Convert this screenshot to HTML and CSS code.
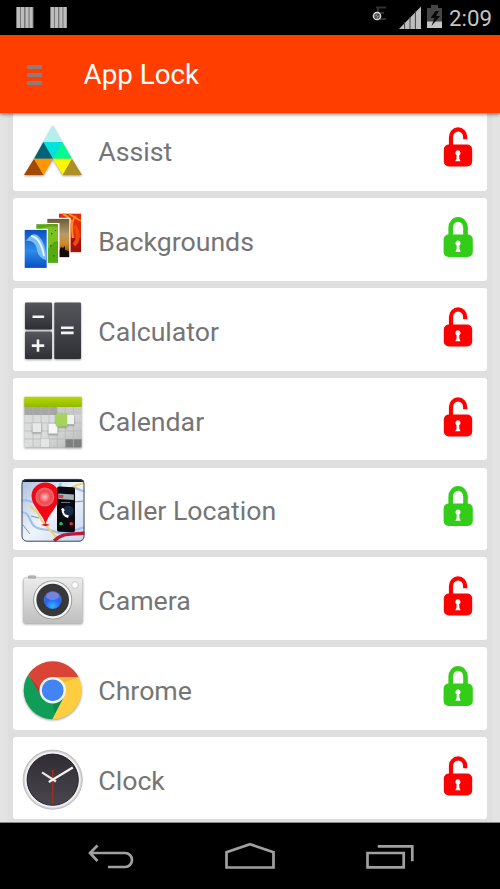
FILE: index.html
```html
<!DOCTYPE html>
<html lang="en">
<head>
    <meta charset="UTF-8">
    <meta name="viewport" content="width=device-width, initial-scale=1.0">
    <title>App Lock</title>
    <link rel="stylesheet" href="styles.css">
</head>
<body>

    <!-- Shared lock icons and gradients -->
    <svg class="defs" width="0" height="0">
        <defs>
            <symbol id="unlocked" viewBox="0 0 30 40">
                <path d="M8 20V10a7 7.500 0 0 1 14.200 0v2.300" fill="none" stroke="#fe0000" stroke-width="4.2"/>
                <rect x=".8" y="17.500" width="28.400" height="22" rx="5" fill="#fe0000"/>
                <path d="M14.900 23.200a2.700 2.700 0 0 1 1.300 5l.2 3.500 1.200 2.600h-5.400l1.300-2.600.1-3.500a2.700 2.700 0 0 1 1.300-5z" fill="#fff"/>
            </symbol>
            <symbol id="locked" viewBox="0 0 30 40">
                <path d="M7.700 20V10.600a7.400 8.200 0 0 1 14.800 0V20" fill="none" stroke="#33cc19" stroke-width="4.600"/>
                <rect x=".6" y="17.500" width="29.200" height="22.500" rx="5" fill="#33cc19"/>
                <path d="M15 23.500a2.700 2.700 0 0 1 1.300 5l.2 3.500 1.200 2.800h-5.400l1.300-2.800.1-3.500a2.700 2.700 0 0 1 1.300-5z" fill="#fff"/>
            </symbol>
            <linearGradient id="key" x1="0" y1="0" x2="0" y2="1">
                <stop offset="0" stop-color="#55555c"/><stop offset="1" stop-color="#2f2f36"/>
            </linearGradient>
            <linearGradient id="metal" x1="0" y1="0" x2="0" y2="1">
                <stop offset="0" stop-color="#ececec"/><stop offset="1" stop-color="#bfbfbf"/>
            </linearGradient>
            <linearGradient id="lime" x1="0" y1="0" x2="0" y2="1">
                <stop offset="0" stop-color="#b7da00"/><stop offset="1" stop-color="#91b800"/>
            </linearGradient>
            <linearGradient id="days" x1="0" y1="0" x2="1" y2="1">
                <stop offset="0" stop-color="#d8dada"/><stop offset=".5" stop-color="#dcdede"/><stop offset="1" stop-color="#b5b7b7"/>
            </linearGradient>
            <linearGradient id="sea" x1="0" y1="0" x2="0" y2="1">
                <stop offset="0" stop-color="#0c4fc0"/><stop offset=".55" stop-color="#2c8cea"/><stop offset="1" stop-color="#0a4fc4"/>
            </linearGradient>
            <linearGradient id="dusk" x1="0" y1="0" x2="0" y2="1">
                <stop offset="0" stop-color="#6d5a3c"/><stop offset=".4" stop-color="#b79a66"/><stop offset=".65" stop-color="#d18a25"/><stop offset="1" stop-color="#5c3205"/>
            </linearGradient>
            <linearGradient id="map" x1="0" y1="0" x2="1" y2="1">
                <stop offset="0" stop-color="#a9bedb"/><stop offset=".5" stop-color="#eff4fb"/><stop offset="1" stop-color="#c6d7f0"/>
            </linearGradient>
            <radialGradient id="lens" cx=".5" cy=".85" r=".8">
                <stop offset="0" stop-color="#35b4ff"/><stop offset=".5" stop-color="#2766f2"/><stop offset="1" stop-color="#5a62c0"/>
            </radialGradient>
            <radialGradient id="pin" cx=".5" cy=".5" r=".5">
                <stop offset="0" stop-color="#ffc4c4"/><stop offset=".6" stop-color="#f04a4e"/><stop offset="1" stop-color="#e56a6e"/>
            </radialGradient>
            <linearGradient id="face" x1="0" y1="0" x2="0" y2="1">
                <stop offset="0" stop-color="#2f2c33"/><stop offset="1" stop-color="#4a464e"/>
            </linearGradient>
            <clipPath id="disc"><circle cx="31.7" cy="32.2" r="29"/></clipPath>
            <clipPath id="tile"><rect x=".5" y=".9" width="63" height="62.8" rx="5"/></clipPath>
        </defs>
    </svg>

    <div class="status-bar">
        <svg class="notifications" width="52" height="22" viewBox="0 0 52 22">
            <path d="M0 0h17.5v21H0zM34 0h17v21H34z" fill="#777"/>
            <path d="M1 0h3v21H1zM5 0h3v21H5zM9.5 0h3v21h-3zM13.6 0h3v21h-3zM35 0h3v21h-3zM39 0h3v21h-3zM43.4 0h3v21h-3zM47.5 0h3v21h-3z" fill="#bdbdbd"/>
        </svg>
        <svg class="system" width="72" height="25" viewBox="0 0 72 25">
            <path d="M4 2.500h10M4 8h8M6 14h8M6 2v12" fill="none" stroke="#303030" stroke-width="2"/>
            <circle cx="5" cy="11" r="4.300" fill="#ddd"/>
            <circle cx="5" cy="11" r="2.200" fill="none" stroke="#444" stroke-width="1.300"/>
            <path d="M3 13l4-4" stroke="#444" stroke-width="1.300"/>
            <path d="M27 24L49 1.500V24z" fill="#bebebe"/>
            <path d="M32.600 17v7M38 12v12M43.400 6v18" stroke="#444" stroke-width="1"/>
            <path d="M55 3h4V0h7v3h4v20H55z" fill="#464646"/>
            <path d="M55 16.500h15V23H55z" fill="#c5c5c5"/>
            <path d="M63.500 6l-5 7h4l-3 8 8.500-10h-4l3-5z" fill="#080808"/>
        </svg>
        <span class="time">2:09</span>
    </div>

    <header class="toolbar">
        <div class="menu"><i></i><i></i><i></i></div>
        <h1>App Lock</h1>
    </header>

    <main class="app-list">
        <div class="app">
            <svg class="icon shadow" viewBox="0 0 64 64">
                <path d="M31.800 6.300L22.300 23h19z" fill="#b5efec"/>
                <path d="M22.300 23h19L32 39.700z" fill="#00e2df"/>
                <path d="M22.300 23L13 39.700h19z" fill="#006377"/>
                <path d="M41.300 23L32 39.700h19z" fill="#00fb92"/>
                <path d="M13 39.700L3 56h19.500z" fill="#a34a00"/>
                <path d="M13 39.700h19L22.500 56z" fill="#ff9500"/>
                <path d="M32 39.700h19L41.700 56z" fill="#fff500"/>
                <path d="M51 39.700L41.700 56H61z" fill="#ac8f25"/>
            </svg>
            <span class="name">Assist</span>
            <svg class="lock"><use href="#unlocked"/></svg>
        </div>
        <div class="app">
            <svg class="icon" viewBox="0 0 64 64">
                <path d="M38 4.700h22v38.500H38z" fill="#e52a05"/>
                <path d="M42 5c7 3 10 8 9 15M55 7c-6 4-5 25 2 32M48 5l12 7" stroke="#ff8c17" stroke-width="2" fill="none"/>
                <path d="M49.500 29h10.500v14H49.500z" fill="#a51208"/>
                <path d="M53 17c5 5 5 14 0 19" stroke="#f0490e" stroke-width="4" fill="none"/>
                <path d="M26.300 8.800h23.200v40.400h-2V10H26.300z" fill="#fff"/>
                <path d="M26.300 9.900h22v38.300h-22z" fill="url(#dusk)"/>
                <path d="M38 42l2-4 2 1 2-2v4l4 1v6H38z" fill="#140a03"/>
                <path d="M15.300 14h23.200v41h-2V15H15.300z" fill="#fff"/>
                <path d="M15.300 15.200H37v38.700H15.300z" fill="#57a912"/>
                <path d="M16 22c8-5 14-5 21-4v15c-5-2-7 4-11 8z" fill="#7cc022"/>
                <path d="M30 24h1.500v1.500H30zM29 36h1.500v1.500H29zM32 46h1.500v1.500H32zM34 21h1v1h-1z" fill="#28720a"/>
                <path d="M2.800 19.800h24V60h-24z" fill="#fff"/>
                <path d="M3.700 20.900h22v38h-22z" fill="url(#sea)"/>
                <path d="M5 32c4-6 7-8 11-6 6 4 8 12 9 18v7c-4-1-8-4-9-10-1-7-6-10-11-9z" fill="#8bcaf8" opacity=".85"/>
                <path d="M10 27c7 1 11 9 13 20" stroke="#e9f7ff" stroke-width="1.800" fill="none"/>
            </svg>
            <span class="name">Backgrounds</span>
            <svg class="lock"><use href="#locked"/></svg>
        </div>
        <div class="app">
            <svg class="icon shadow" viewBox="0 0 64 64">
                <rect x="4" y="3.400" width="27" height="27" rx="1" fill="url(#key)"/>
                <rect x="4" y="32.400" width="27" height="27.600" rx="1" fill="url(#key)"/>
                <rect x="33.300" y="3.400" width="26.700" height="56.600" rx="1" fill="url(#key)"/>
                <path d="M11.500 17.700h11.600M10.800 46.600h12.400M17 40.400v12.400M40 28.700h12.600M40 33.900h12.600" stroke="#f4f4f4" stroke-width="2.600"/>
            </svg>
            <span class="name">Calculator</span>
            <svg class="lock"><use href="#unlocked"/></svg>
        </div>
        <div class="app">
            <svg class="icon shadow" viewBox="0 0 64 64">
                <path d="M3.500 17h57v41.300h-57z" fill="url(#days)"/>
                <path d="M3.500 17.700h32.800v8.300H3.500z" fill="#a5a7a7"/>
                <path d="M36.300 17.700h24V26h-24z" fill="#c8caca"/>
                <path d="M44 50h16.500v8.300H44z" fill="#7d7f7f"/>
                <path d="M3.500 34h57M3.500 42h57M3.500 50h57M12 18v40M20 18v40M28 18v40M36.300 18v40M44.300 18v40M52.400 18v40" stroke="#b6b8b8" stroke-width=".7"/>
                <path d="M3.300 7.800h57.400V18H3.300z" fill="url(#lime)"/>
                <path d="M20 50h8v8h-8z" fill="#e4e4e4"/>
                <g class="shadow">
                    <path d="M11.500 34.200h8.600v9h-8.600z" fill="#e9e9e9"/>
                    <path d="M27.500 34.800h9v9.800h-9z" fill="#f6f6f6"/>
                    <path d="M45 25.800h8v9.500h-8z" fill="#f2f2f2"/>
                    <path d="M34.700 24.500h11.500v13H34.700z" fill="#a5d35c"/>
                </g>
            </svg>
            <span class="name">Calendar</span>
            <svg class="lock"><use href="#unlocked"/></svg>
        </div>
        <div class="app">
            <svg class="icon" viewBox="0 0 64 64">
                <g clip-path="url(#tile)">
                    <path d="M0 0h64v64H0z" fill="url(#map)"/>
                    <path d="M0 34c9 0 8 9 13 14s13 2 22 6 17-2 29-5M0 23c8-3 11 4 18 0M40 5c-4 4 4 7 10 5s9 4 14 3" stroke="#a3bfe6" stroke-width="2.200" fill="none"/>
                    <path d="M9 28l8 7 4 8 15 17M50 10l6-3 8-2" stroke="#f3d06d" stroke-width="2" fill="none"/>
                    <path d="M10 38l8 2M54 24l8-1M2 47l7 9" stroke="#8091b0" stroke-width="1" fill="none"/>
                    <path d="M33 63c9-9 17-6 31-8" stroke="#c41637" stroke-width="3.400" fill="none"/>
                    <path d="M0 0h64v4H0z" fill="#111722"/>
                </g>
                <path d="M24.500 46.500C22 36 10.500 28 10.500 18a14 13.500 0 0 1 28 0c0 10-11.500 18-14 28.500z" fill="#f10817"/>
                <path d="M20 47l4.500-1.500L29 47l-4.500 1z" fill="#e30b14"/>
                <circle cx="23.800" cy="19" r="9.500" fill="url(#pin)"/>
                <path d="M36 10.500q0-2 2-2l14 .8q2 0 2 2v41q0 2-2 2l-14-.5q-2 0-2-2z" fill="#080a0f"/>
                <path d="M37.300 15.500l15.600 1V22l-15.600-1z" fill="#a8aeb6"/>
                <path d="M37.300 17h5v3h-5z" fill="#d63d48"/>
                <path d="M40 24.500h9" stroke="#70757f" stroke-width="1"/>
                <circle cx="47" cy="33" r="5.500" fill="#172b48"/>
                <path d="M41.500 31c0 4 2 7 5.500 8" stroke="#f5f5f5" stroke-width="2" fill="none"/>
                <path d="M41 30.500l2 2.500M44.500 37.500l3 1" stroke="#fff" stroke-width="2.200"/>
                <circle cx="40" cy="45.800" r="1.800" fill="#20c463"/>
                <circle cx="50.300" cy="45.800" r="1.800" fill="#e22b35"/>
                <rect x="1" y="1.400" width="62" height="61.800" rx="5" fill="none" stroke="#3a475f" stroke-width="1"/>
            </svg>
            <span class="name">Caller Location</span>
            <svg class="lock"><use href="#locked"/></svg>
        </div>
        <div class="app">
            <svg class="icon shadow" viewBox="0 0 64 64">
                <rect x="7" y="7.800" width="8" height="3.500" rx="1.200" fill="#aaa"/>
                <rect x="2.500" y="9.800" width="59" height="45.200" rx="2" fill="url(#metal)" stroke="#c4c4c4" stroke-width=".6"/>
                <rect x="7" y="7.800" width="8" height="3" rx="1.200" fill="#b0b0b0"/>
                <circle cx="31.700" cy="32" r="19.500" fill="#8e8e8e"/>
                <circle cx="31.700" cy="32" r="18.700" fill="#f3f3f3"/>
                <circle cx="31.700" cy="32" r="16.300" fill="#373839"/>
                <circle cx="31.700" cy="32" r="9" fill="url(#lens)"/>
                <ellipse cx="31.700" cy="28" rx="6.500" ry="4" fill="#9aa0e4" opacity=".55"/>
                <circle cx="54" cy="17" r="3.300" fill="#fff" stroke="#bbb" stroke-width=".7"/>
            </svg>
            <span class="name">Camera</span>
            <svg class="lock"><use href="#unlocked"/></svg>
        </div>
        <div class="app">
            <svg class="icon shadow" viewBox="0 0 64 64">
                <g clip-path="url(#disc)">
                    <path d="M0 0h64v19.200H31.700L20.400 38.700 7.500 17z" fill="#da4437"/>
                    <path d="M7.500 17L20.400 38.700 31.700 45.200 43 38.700 31 62H0V17z" fill="#0f9d58"/>
                    <path d="M31.700 19.200H64V64H30l13-25.300z" fill="#ffcd40"/>
                    <path d="M31.700 19.200h25.500L44.500 24z" fill="#e5aa2e" opacity=".6"/>
                    <path d="M8.500 18.500L20.400 38.700 18.700 31z" fill="#a32d23" opacity=".6"/>
                    <path d="M43 38.700L34 55l-2.300-9.800z" fill="#0a7c43" opacity=".6"/>
                </g>
                <circle cx="31.700" cy="32.200" r="13.200" fill="#f5f7f5"/>
                <circle cx="31.700" cy="32.200" r="10.800" fill="#4284f3"/>
            </svg>
            <span class="name">Chrome</span>
            <svg class="lock"><use href="#locked"/></svg>
        </div>
        <div class="app">
            <svg class="icon" viewBox="0 0 64 64">
                <circle cx="31.700" cy="31.700" r="29.600" fill="#d3d3d6" stroke="#b5b5b5" stroke-width=".8"/>
                <circle cx="31.700" cy="31.700" r="28" fill="#f0f0f4"/>
                <circle cx="31.700" cy="31.700" r="25.600" fill="url(#face)" stroke="#252329"/>
                <path d="M31.700 22v33.500" stroke="#a52b1f" stroke-width="1.700"/>
                <path d="M21 24.300l14 9.200" stroke="#e8e8e8" stroke-width="2.200"/>
                <path d="M27.800 34l24-14.500" stroke="#f4f4f4" stroke-width="2.200"/>
            </svg>
            <span class="name">Clock</span>
            <svg class="lock"><use href="#unlocked"/></svg>
        </div>
    </main>

    <nav class="nav-bar">
        <svg viewBox="0 0 48 28"><path d="M2 10h36a7 7 0 0 1 0 14H21M10.500 2.500L3 10l7.500 8"/></svg>
        <svg viewBox="0 0 52 28"><path d="M1.500 24.500V9.300L25 1.200l23.500 8.100v15.200z"/></svg>
        <svg viewBox="0 0 48 28"><path d="M1.500 10h36.200v14.400H1.500zM11.800 3.300h34.500v14.900"/></svg>
    </nav>

</body>
</html>
```

FILE: styles.css
```css
* {
    box-sizing: border-box;
}

body {
    display: flex;
    flex-direction: column;
    height: 889px;
    margin: 0;
    overflow: hidden;
    background: #000;
    font-family: Roboto, "Noto Sans", sans-serif;
}

svg {
    display: block;
    flex: none;
}

.defs {
    position: absolute;
}

/* Status bar */
.status-bar {
    display: flex;
    align-items: center;
    flex: none;
    height: 35px;
    padding: 0 8px 0 16px;
    background: #000;
}

.system {
    margin: 0 5px 0 auto;
}

.time {
    color: #c4c4c4;
    font-size: 22.3px;
    line-height: 35px;
    padding-top: 2px;
}

/* Toolbar */
.toolbar {
    display: flex;
    align-items: center;
    flex: none;
    height: 78px;
    padding-left: 27px;
    background: #ff3e00;
    box-shadow: 0 1px 4px rgba(0, 0, 0, 0.6);
    z-index: 1;
}

.menu {
    display: flex;
    flex-direction: column;
    gap: 4.3px;
    width: 15px;
    margin-top: 2px;
}

.menu i {
    height: 4px;
    background: #8b7d7b;
}

h1 {
    margin: 0 0 0 41.5px;
    color: #fff;
    font-size: 27.8px;
    font-weight: 400;
}

/* App list, scrolled slightly under the toolbar */
.app-list {
    flex: none;
    height: 709.5px;
    padding: 0 13px;
    overflow: hidden;
    background: linear-gradient(90deg, #e3e3e3 7px, #dfdfdf 8px, #dfdfdf 492px, #e3e3e3 493px);
    border-bottom: 1px solid #888;
}

.app {
    display: flex;
    align-items: center;
    height: 82.6px;
    margin-bottom: 7.2px;
    padding: 0 14px 0 8px;
    background: #fff;
    border-radius: 3px;
}

.app:first-child {
    margin-top: -4.6px;
}

.icon {
    width: 64px;
    height: 64px;
    margin-top: 3px;
}

.shadow {
    filter: drop-shadow(0 1px 1px rgba(0, 0, 0, 0.4));
}

.name {
    margin-left: 13.3px;
    padding-top: 5px;
    color: #757575;
    font-size: 26.7px;
}

.lock {
    width: 30px;
    height: 40px;
    margin: 0 0 5px auto;
}

/* Navigation bar */
.nav-bar {
    display: flex;
    align-items: center;
    justify-content: space-between;
    flex: 1;
    padding: 2px 86px 0 87px;
}

.nav-bar svg {
    height: 28px;
    fill: none;
    stroke: #a0a0a0;
    stroke-width: 2.7;
}
```
